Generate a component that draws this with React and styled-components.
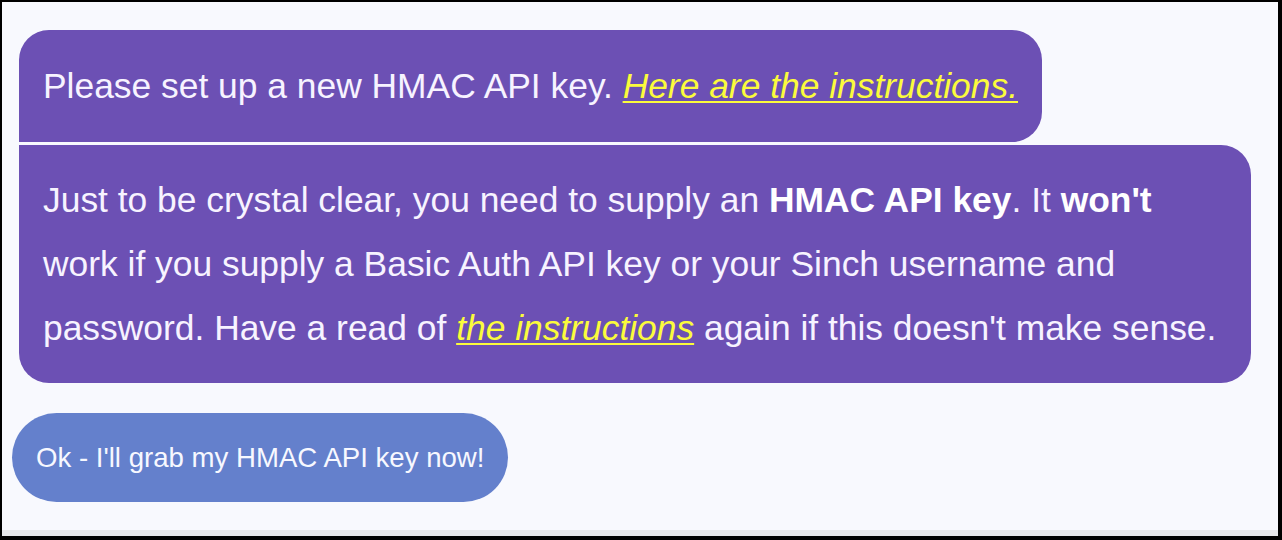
import React from "react";
import styled, { createGlobalStyle } from "styled-components";

const GlobalStyle = createGlobalStyle`
  html, body {
    margin: 0;
    padding: 0;
    background: #000;
  }
  * {
    box-sizing: border-box;
  }
`;

const Frame = styled.div`
  width: 1282px;
  height: 540px;
  border-style: solid;
  border-color: #000;
  border-width: 2px 4px 4px 2px;
  background: #f8f9fe;
  display: flex;
  flex-direction: column;
  font-family: "Liberation Sans", Arial, sans-serif;
  overflow: hidden;
`;

const Chat = styled.div`
  flex: 1;
  display: flex;
  flex-direction: column;
  align-items: flex-start;
  padding: 28px 0 0 17px;
`;

const Bubble = styled.div`
  background: #6c50b4;
  color: #f7f3ff;
  font-size: 35.4px;
  line-height: 64px;
  padding: ${p => (p.first ? "24px 24px" : "23px 24px")};
  border-radius: ${p => (p.first ? "30px 30px 30px 0" : "0 30px 30px 30px")};
  max-width: 1232px;
  margin-top: ${p => (p.first ? "0" : "3px")};
  b {
    font-weight: bold;
    color: #fff;
  }
`;

const Link = styled.a`
  color: #fbfb3c;
  font-style: italic;
  text-decoration: underline;
  text-decoration-thickness: 2px;
  text-underline-offset: 3px;
  cursor: pointer;
`;

const Reply = styled.button`
  margin: 30px 0 0 -7px;
  height: 89px;
  padding: 0 24px;
  border: none;
  border-radius: 45px;
  background: #6480cc;
  color: #f7f8ff;
  font-family: "Liberation Sans", Arial, sans-serif;
  font-size: 27.6px;
  cursor: pointer;
`;

const BottomEdge = styled.div`
  height: 6px;
  background: #e6e7ea;
`;

const App = () => {
  return (
    <>
      <GlobalStyle />
      <Frame>
        <Chat>
          <Bubble first>
            Please set up a new HMAC API key. <Link>Here are the instructions.</Link>
          </Bubble>
          <Bubble>
            Just to be crystal clear, you need to supply an <b>HMAC API key</b>. It{" "}
            <b>won't</b> work if you supply a Basic Auth API key or your Sinch username
            and password. Have a read of <Link>the instructions</Link> again if this
            doesn't make sense.
          </Bubble>
          <Reply>Ok - I'll grab my HMAC API key now!</Reply>
        </Chat>
        <BottomEdge />
      </Frame>
    </>
  );
};

export default App;
